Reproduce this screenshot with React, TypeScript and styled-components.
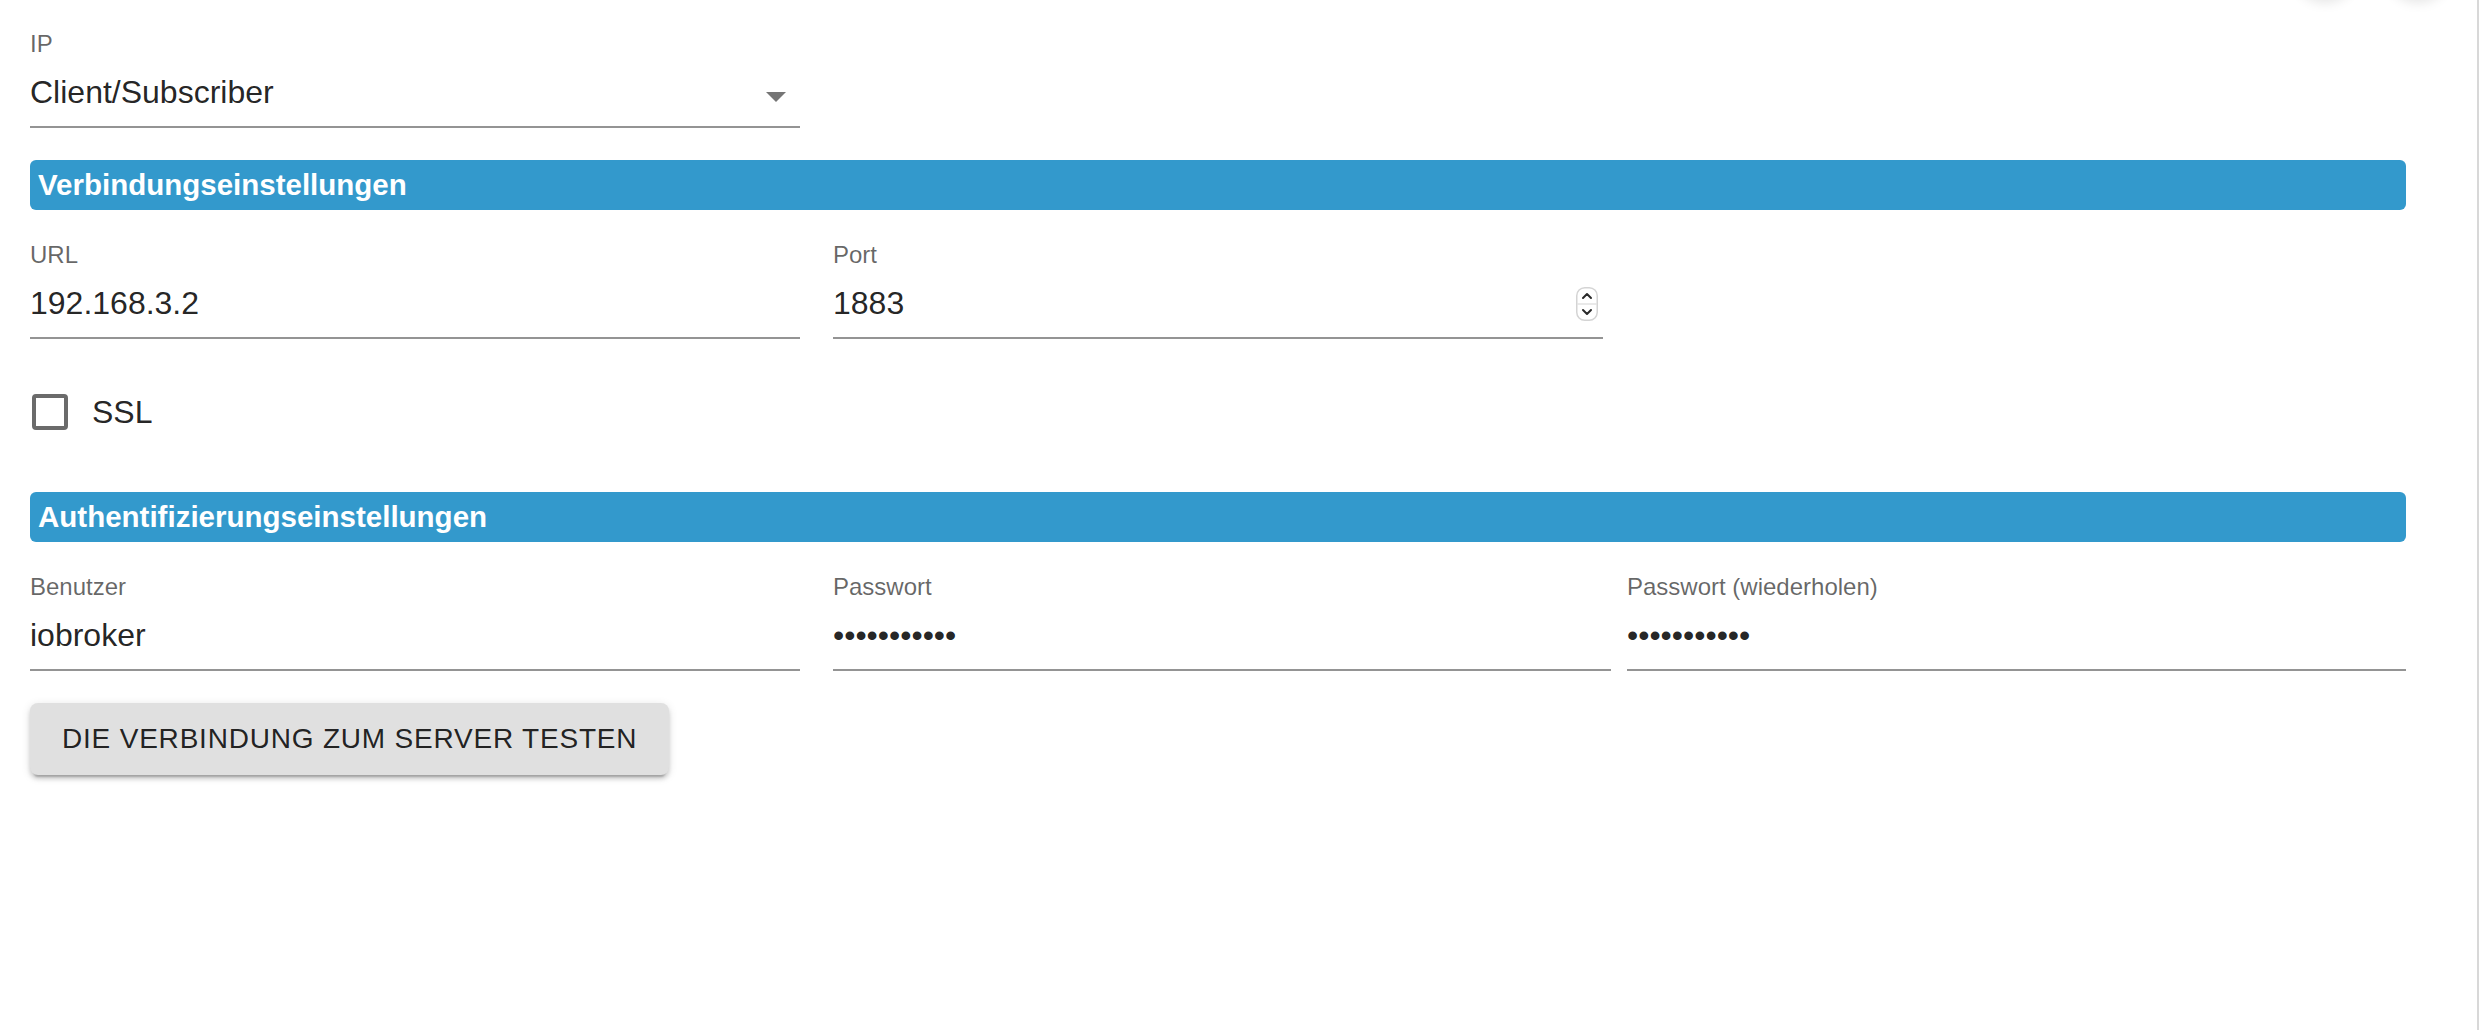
import styled, { createGlobalStyle } from "styled-components";

const GlobalStyle = createGlobalStyle`
  html, body {
    margin: 0;
    padding: 0;
    background: #ffffff;
  }
  body {
    font-family: "Liberation Sans", Arial, Helvetica, sans-serif;
    color: rgba(0, 0, 0, 0.87);
  }
`;

const Page = styled.div`
  position: relative;
  box-sizing: border-box;
  width: 2479px;
  min-height: 1030px;
  padding: 32px 71px 0 30px;
  border-right: 2px solid #d8d8d8;
  overflow: hidden;
  display: flex;
  flex-direction: column;
`;

// round buttons of the toolbar above, scrolled out; only their shadows show
const TopActions = styled.div`
  position: absolute;
  top: -66px;
  right: 27px;
  display: flex;
  gap: 29px;
`;

const RoundButton = styled.div`
  width: 64px;
  height: 64px;
  border-radius: 50%;
  background: #fff;
  box-shadow: 0 5px 12px rgba(0, 0, 0, 0.1);
`;

const Row = styled.div`
  display: flex;
  margin-bottom: 32px;
`;

const Field = styled.div<{ $width: number; $ml?: number }>`
  display: flex;
  flex-direction: column;
  flex: none;
  width: ${(p) => p.$width}px;
  margin-left: ${(p) => p.$ml ?? 0}px;
`;

const Label = styled.label`
  font-size: 24px;
  line-height: 24px;
  color: rgba(0, 0, 0, 0.6);
  white-space: nowrap;
`;

const InputBox = styled.div`
  margin-top: 11px;
  height: 38px;
  padding: 6px 0 15px;
  border-bottom: 2px solid #949494;
  display: flex;
  align-items: center;
  justify-content: space-between;
`;

const Value = styled.span`
  font-size: 32px;
  line-height: 38px;
  color: rgba(0, 0, 0, 0.87);
  white-space: nowrap;
`;

const DropIcon = styled.svg`
  width: 48px;
  height: 48px;
  margin: -1px 0 -9px;
  flex: none;
`;

const Spinner = styled.svg`
  width: 22px;
  height: 34px;
  margin: 2px 5px 0 0;
  flex: none;
`;

const SectionBar = styled.div`
  height: 50px;
  line-height: 50px;
  padding-left: 8px;
  margin-bottom: 33px;
  border-radius: 6px;
  background: #3399cc;
  color: #ffffff;
  font-size: 29.5px;
  font-weight: 700;
`;

const CheckRow = styled.label`
  display: flex;
  align-items: center;
  gap: 24px;
  margin: 23px 0 62px 2px;
  height: 36px;
`;

const CheckBox = styled.span`
  box-sizing: border-box;
  width: 36px;
  height: 36px;
  border: 4px solid #6b6b6b;
  border-radius: 4px;
`;

const CheckText = styled.span`
  font-size: 32px;
  line-height: 36px;
  color: rgba(0, 0, 0, 0.87);
`;

const TestButton = styled.button`
  align-self: flex-start;
  height: 72px;
  padding: 0 32px;
  border: none;
  border-radius: 8px;
  background: #e0e0e0;
  color: rgba(0, 0, 0, 0.87);
  font-family: "Liberation Sans", Arial, Helvetica, sans-serif;
  font-size: 28px;
  letter-spacing: 0.8px;
  text-transform: uppercase;
  box-shadow: 0 6px 2px -4px rgba(0, 0, 0, 0.2), 0 4px 4px 0 rgba(0, 0, 0, 0.14),
    0 2px 10px 0 rgba(0, 0, 0, 0.12);
  cursor: pointer;
`;

interface TextFieldProps {
  label: string;
  value: string;
  width: number;
  ml?: number;
  adornment?: React.ReactNode;
}

function TextField({ label, value, width, ml, adornment }: TextFieldProps) {
  return (
    <Field $width={width} $ml={ml}>
      <Label>{label}</Label>
      <InputBox>
        <Value>{value}</Value>
        {adornment}
      </InputBox>
    </Field>
  );
}

const arrowDown = (
  <DropIcon viewBox="0 0 24 24">
    <path d="M7 10l5 5 5-5z" fill="rgba(0,0,0,0.54)" />
  </DropIcon>
);

const numberSpinner = (
  <Spinner viewBox="0 0 22 34">
    <rect x="0.75" y="0.75" width="20.5" height="32.5" rx="8" fill="#fff" stroke="#d4d4d4" strokeWidth="1.5" />
    <line x1="1" y1="17" x2="21" y2="17" stroke="#e2e2e2" strokeWidth="1.5" />
    <path d="M7 11l4-4 4 4" fill="none" stroke="#2a2a2a" strokeWidth="2" strokeLinecap="round" strokeLinejoin="round" />
    <path d="M7 23l4 4 4-4" fill="none" stroke="#2a2a2a" strokeWidth="2" strokeLinecap="round" strokeLinejoin="round" />
  </Spinner>
);

const dots = "•••••••••••";

export default function App() {
  return (
    <>
      <GlobalStyle />
      <Page>
        <TopActions>
          <RoundButton />
          <RoundButton />
        </TopActions>

        <Row>
          <TextField label="IP" value="Client/Subscriber" width={770} adornment={arrowDown} />
        </Row>

        <SectionBar>Verbindungseinstellungen</SectionBar>
        <Row>
          <TextField label="URL" value="192.168.3.2" width={770} />
          <TextField label="Port" value="1883" width={770} ml={33} adornment={numberSpinner} />
        </Row>

        <CheckRow>
          <CheckBox />
          <CheckText>SSL</CheckText>
        </CheckRow>

        <SectionBar>Authentifizierungseinstellungen</SectionBar>
        <Row>
          <TextField label="Benutzer" value="iobroker" width={770} />
          <TextField label="Passwort" value={dots} width={778} ml={33} />
          <TextField label="Passwort (wiederholen)" value={dots} width={779} ml={16} />
        </Row>

        <TestButton>Die Verbindung zum Server testen</TestButton>
      </Page>
    </>
  );
}
